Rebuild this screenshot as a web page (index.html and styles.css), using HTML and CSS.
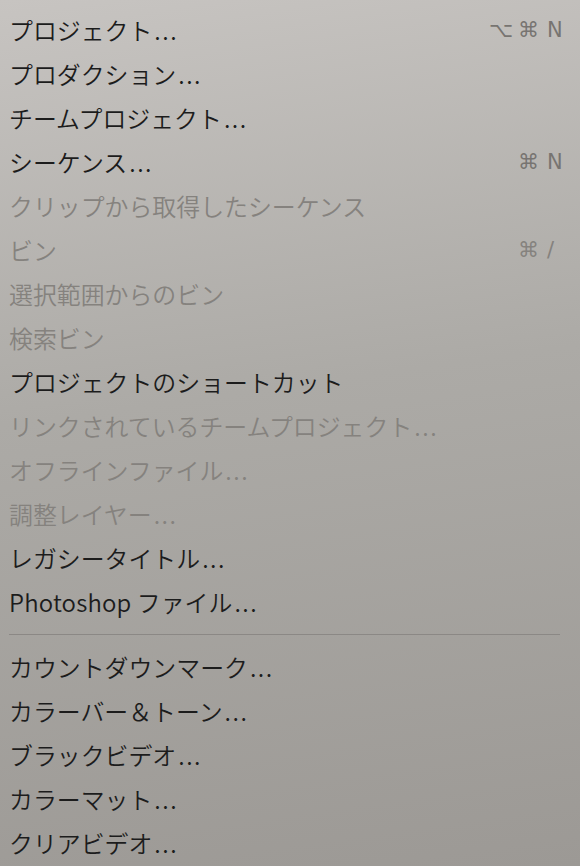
FILE: index.html
```html
<!DOCTYPE html>
<html lang="ja">
<head>
<meta charset="utf-8">
<link rel="stylesheet" href="styles.css">
</head>
<body>
<div class="menu">
  <div class="item"><span class="label">プロジェクト<span class="dots">...</span></span><span class="mods">⌥⌘</span><span class="key">N</span></div>
  <div class="item"><span class="label">プロダクション<span class="dots">...</span></span></div>
  <div class="item"><span class="label">チームプロジェクト<span class="dots">...</span></span></div>
  <div class="item"><span class="label">シーケンス<span class="dots">...</span></span><span class="mods">⌘</span><span class="key">N</span></div>
  <div class="item disabled"><span class="label">クリップから取得したシーケンス</span></div>
  <div class="item disabled"><span class="label">ビン</span><span class="mods">⌘</span><span class="key">/</span></div>
  <div class="item disabled"><span class="label">選択範囲からのビン</span></div>
  <div class="item disabled"><span class="label">検索ビン</span></div>
  <div class="item"><span class="label">プロジェクトのショートカット</span></div>
  <div class="item disabled"><span class="label">リンクされているチームプロジェクト<span class="dots">...</span></span></div>
  <div class="item disabled"><span class="label">オフラインファイル<span class="dots">...</span></span></div>
  <div class="item disabled"><span class="label">調整レイヤー<span class="dots">...</span></span></div>
  <div class="item"><span class="label">レガシータイトル<span class="dots">...</span></span></div>
  <div class="item"><span class="label"><span class="latin">Photoshop</span> ファイル<span class="dots">...</span></span></div>
  <div class="separator"></div>
  <div class="item"><span class="label">カウントダウンマーク<span class="dots">...</span></span></div>
  <div class="item"><span class="label">カラーバー＆トーン<span class="dots">...</span></span></div>
  <div class="item"><span class="label">ブラックビデオ<span class="dots">...</span></span></div>
  <div class="item"><span class="label">カラーマット<span class="dots">...</span></span></div>
  <div class="item"><span class="label">クリアビデオ<span class="dots">...</span></span></div>
</div>
</body>
</html>
```

FILE: styles.css
```css
html, body {
  margin: 0;
  padding: 0;
}
body {
  width: 580px;
  height: 866px;
  overflow: hidden;
  background: linear-gradient(172deg, #c7c4c1 0%, #acaaa6 45%, #9c9995 100%);
  font-family: "Noto Sans CJK JP", "Noto Sans", sans-serif;
  color: #1c1c1c;
}
.menu {
  display: flex;
  flex-direction: column;
  padding-top: 8px;
}
.item {
  display: grid;
  grid-template-columns: 1fr auto 36px;
  align-items: center;
  height: 44px;
  padding-left: 9px;
}
.label {
  font-size: 23.9px;
  font-weight: 350;
  line-height: 44px;
  white-space: nowrap;
}
.dots {
  letter-spacing: 1.5px;
  padding-left: 2px;
}
.latin {
  letter-spacing: 0.2px;
}
.mods, .key {
  font-family: "DejaVu Sans", "Noto Sans", sans-serif;
  font-size: 21px;
  color: #777471;
  line-height: 44px;
}
.mods {
  letter-spacing: 5px;
  text-align: right;
}
.key {
  padding-left: 3px;
}
.disabled .label, .disabled .mods, .disabled .key {
  color: #85827e;
}
.separator {
  height: 1px;
  margin: 10px 20px 10px 9px;
  background: #8b8885;
}
```
